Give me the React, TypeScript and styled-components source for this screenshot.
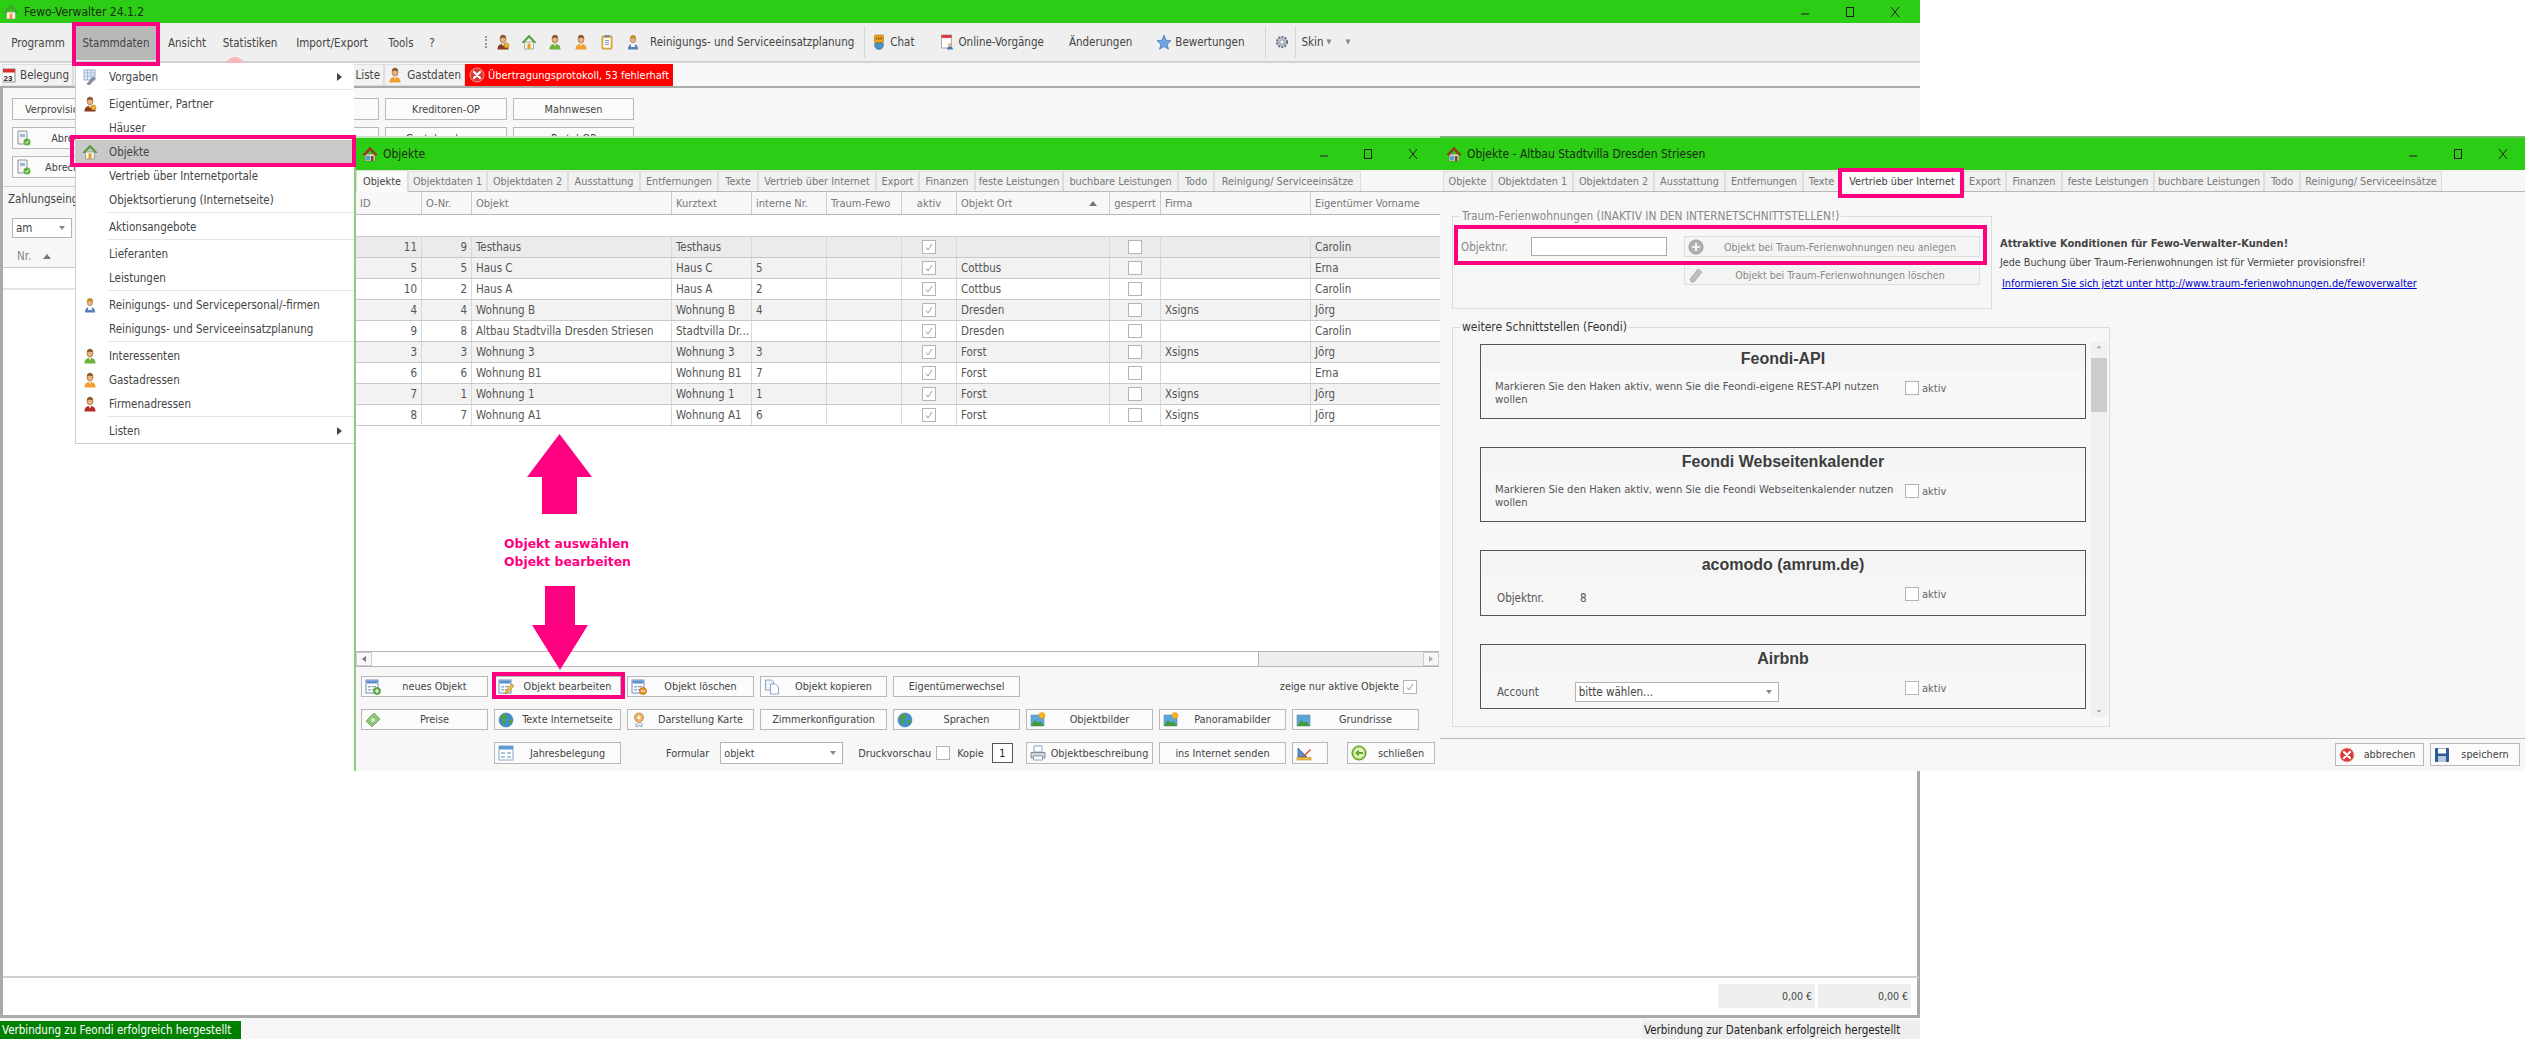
import React from "react";
import styled, { createGlobalStyle } from "styled-components";

const UI = `"DejaVu Sans Condensed", "DejaVu Sans", sans-serif`;
const PINK = "#ff0080";
const GREEN = "#2bce14";

const Global = createGlobalStyle`
  html, body { margin: 0; padding: 0; background: #fff; overflow: hidden; }
  #root { width: 2525px; height: 1039px; }
  * { box-sizing: border-box; }
  body { font-family: ${UI}; font-size: 11.5px; color: #444; font-stretch: condensed; }
`;

/* ---------- icons ---------- */
type IconName =
  | "house" | "lodge" | "green" | "orange" | "red" | "owner" | "clip" | "worker" | "chat" | "online" | "star" | "gear"
  | "cal" | "form" | "formEdit" | "formDel" | "copy" | "money" | "globe" | "pin" | "pic" | "plan" | "printer" | "ruler"
  | "back" | "cancel" | "save" | "plus" | "eraser" | "docOk" | "tools" | "year";

const Person = ({ body, tie }: { body: string; tie?: string }) => (
  <>
    <path d="M2.5 15.5c0-4 2-5.5 5.5-5.5s5.5 1.500 5.500 5.500z" fill={body} />
    <path d="M6.500 9.500h3l-1.500 3z" fill={tie || "#f5e3c8"} />
    <ellipse cx="8" cy="5" rx="3" ry="4" fill="#e9b27f" stroke="#8a5a30" strokeWidth=".6" />
    <path d="M5 4.500C5 2 6.500 1 8 1s3 1 3 3.500C9.500 3.500 6.500 3.500 5 4.500z" fill="#8a5a30" />
  </>
);

const FormBase = () => (
  <>
    <rect x="1" y="1" width="12" height="13" fill="#fff" stroke="#6d8fb5" />
    <rect x="1.500" y="1.500" width="11" height="3" fill="#5b8fd0" />
    <path d="M3 7h3v1.500H3zM3 10h3v1.500H3z" fill="#8bb0d8" />
    <path d="M7 7.700h4M7 10.700h4" stroke="#7a7a7a" />
  </>
);

const Picture = ({ sun }: { sun?: boolean }) => (
  <>
    <rect x="1" y="3" width="13" height="11" fill="#5aa5dc" stroke="#6c8aa0" strokeWidth=".6" />
    <path d="M1 14l4-6 3 3 2-2 4 5z" fill="#3f9a3a" />
    {sun && <circle cx="12" cy="3.500" r="3" fill="#f5b428" stroke="#e08a10" strokeWidth=".5" />}
  </>
);

const paths: Record<IconName, React.ReactNode> = {
  house: (
    <>
      <path d="M3.500 8v7h9V8z" fill="#f5f5f0" stroke="#7a9a70" strokeWidth=".7" />
      <path d="M8 1L1 8.500h2L8 3.500l5 5h2z" fill="#55a83c" stroke="#3c7a2c" strokeWidth=".5" />
      <rect x="6.500" y="9.500" width="3" height="5.500" fill="#f09a28" />
    </>
  ),
  lodge: (
    <>
      <path d="M3 8v7h10V8z" fill="#e8d8c0" stroke="#7a6040" strokeWidth=".5" />
      <path d="M8 1L1 8.500l2 1L8 4l5 5.500 2-1z" fill="#a83c22" stroke="#6c2812" strokeWidth=".5" />
      <circle cx="6" cy="12" r="2.500" fill="#5a9ed0" />
      <rect x="9" y="10" width="2.500" height="5" fill="#70492a" />
    </>
  ),
  green: <Person body="#6cb23c" />,
  orange: <Person body="#f0a030" />,
  red: <Person body="#b52a2a" tie="#fff" />,
  owner: (
    <>
      <Person body="#8c3a1e" />
      <circle cx="11.500" cy="11.500" r="2.500" fill="#f0b030" stroke="#9a6a10" strokeWidth=".5" />
    </>
  ),
  clip: (
    <>
      <rect x="3" y="2" width="10" height="13" rx="1" fill="#f4c44a" stroke="#a87c18" strokeWidth=".7" />
      <rect x="4.500" y="4" width="7" height="9.500" fill="#fff" />
      <rect x="5.500" y="1" width="5" height="2.500" fill="#7a8da0" />
      <path d="M6 6.500h4M6 8.500h4M6 10.500h4" stroke="#5a7ca8" strokeWidth=".8" />
    </>
  ),
  worker: (
    <>
      <path d="M3 15.500c0-4 2-5.500 5-5.500s5 1.500 5 5.500z" fill="#5480bc" />
      <path d="M6 10h4v3H6z" fill="#f5f5f5" />
      <ellipse cx="8" cy="5.500" rx="2.700" ry="3.300" fill="#e9b27f" stroke="#8a5a30" strokeWidth=".5" />
      <path d="M5 4.500C5 2 6.500 1 8 1s3 1 3 3.500z" fill="#c09020" />
    </>
  ),
  chat: (
    <>
      <circle cx="8" cy="11" r="4.500" fill="#4a90c8" stroke="#2c6a98" strokeWidth=".5" />
      <path d="M5 9l2 1-1 3z" fill="#5aa040" />
      <rect x="3.500" y="1" width="9" height="7.500" rx="1" fill="#f2a51f" stroke="#9a6a10" strokeWidth=".6" />
      <path d="M5.500 3.500v2M7.500 3.500v2M9 3.500v2M10.500 3.500v2" stroke="#5c3a0a" strokeWidth=".8" />
    </>
  ),
  online: (
    <>
      <rect x="2.500" y="1" width="10" height="13" fill="#fff" stroke="#8b8b8b" strokeWidth=".7" />
      <rect x="2.500" y="1" width="10" height="3" fill="#d84040" />
      <circle cx="11" cy="11" r="2" fill="#e9b27f" />
      <path d="M8 15.500c0-2 1.500-3 3-3s3 1 3 3z" fill="#3f78b5" />
    </>
  ),
  star: <path d="M8 1l2 5.200 5 .5-3.800 3.500 1.200 5L8 12.500l-4.400 2.700 1.200-5L1 6.700l5-.5z" fill="#6ea8e0" stroke="#3c74b0" strokeWidth=".7" />,
  gear: (
    <>
      <circle cx="8" cy="8" r="5" fill="#c8ccd8" stroke="#6c7488" strokeWidth="2.200" strokeDasharray="2 1.200" />
      <circle cx="8" cy="8" r="2.200" fill="#fff" stroke="#6c7488" strokeWidth=".8" />
    </>
  ),
  cal: (
    <>
      <rect x="1" y="2" width="14" height="13" fill="#fff" stroke="#777" strokeWidth=".8" />
      <rect x="1" y="2" width="14" height="3.500" fill="#d83030" />
      <text x="8" y="13.500" fontSize="8" fontWeight="700" textAnchor="middle" fill="#222" fontFamily="Liberation Sans">23</text>
    </>
  ),
  form: (
    <>
      <FormBase />
      <circle cx="12" cy="12" r="3.500" fill="#62b046" stroke="#357a22" strokeWidth=".6" />
      <path d="M12 10v4M10 12h4" stroke="#fff" />
    </>
  ),
  formEdit: (
    <>
      <FormBase />
      <path d="M7 15l1-3 6-7 2 1.800-6 7z" fill="#f0c040" stroke="#a87c18" strokeWidth=".6" />
    </>
  ),
  formDel: (
    <>
      <FormBase />
      <circle cx="12" cy="12" r="3.500" fill="#f0922a" stroke="#a85c10" strokeWidth=".6" />
      <path d="M10 12h4" stroke="#fff" />
    </>
  ),
  copy: (
    <>
      <path d="M1.500 1h6l2 2v8h-8z" fill="#eef3fa" stroke="#6f8fb8" strokeWidth=".8" />
      <path d="M6.500 5h5l3 3v7h-8z" fill="#fff" stroke="#6f8fb8" strokeWidth=".8" />
    </>
  ),
  money: (
    <>
      <path d="M1 9l8-8 6 6-8 8z" fill="#8fc878" stroke="#5c9a48" strokeWidth=".7" />
      <circle cx="8" cy="8" r="2" fill="#d7edc8" />
    </>
  ),
  globe: (
    <>
      <circle cx="8" cy="8" r="7" fill="#3f8fd0" stroke="#2a6aa0" strokeWidth=".5" />
      <path d="M3 4c3-2 5-2 6-1 1 2-1 3-2 4s1 3 0 5-3-1-3-3-3-2-1-5zM11 8c2-1 3 0 3 1 0 2-2 3-3 3s-1-3 0-4z" fill="#4fa040" />
    </>
  ),
  pin: (
    <>
      <path d="M8 1a4.500 4.500 0 0 1 4.500 4.500C12.500 9 8 11 8 11S3.500 9 3.500 5.500A4.500 4.500 0 0 1 8 1z" fill="#eeb46c" stroke="#a0702c" strokeWidth=".7" />
      <circle cx="8" cy="5.500" r="1.500" fill="#fff" />
      <path d="M5 11v4l3-1.500 3 1.500v-4" fill="#e4e8f0" stroke="#7c8aa0" strokeWidth=".7" />
    </>
  ),
  pic: <Picture sun />,
  plan: <Picture />,
  printer: (
    <>
      <path d="M4 1h8v6H4z" fill="#fff" stroke="#6f8fb8" strokeWidth=".8" />
      <path d="M1 7.500h14V13H1z" fill="#cfd6de" stroke="#6a7888" strokeWidth=".8" />
      <path d="M3.500 11h9v4h-9z" fill="#fff" stroke="#6a7888" strokeWidth=".7" />
    </>
  ),
  ruler: (
    <>
      <path d="M2 3v9h9z" fill="#5b8fd0" stroke="#2c5a96" strokeWidth=".7" />
      <path d="M5 13l9-9 1 1-9 9z" fill="#e04a30" />
      <rect x="1" y="12.500" width="14" height="2.500" fill="#f0c040" stroke="#a87c18" strokeWidth=".5" />
    </>
  ),
  back: (
    <>
      <circle cx="8" cy="8" r="7" fill="#a8d85c" stroke="#4e8a20" strokeWidth="1" />
      <circle cx="8" cy="8" r="5" fill="#e8f6d0" />
      <path d="M4 8l4-3.500V7h4v2H8v2.500z" fill="#62a828" />
    </>
  ),
  cancel: (
    <>
      <circle cx="8" cy="8" r="7" fill="#d83a3a" stroke="#f4b0b0" strokeWidth=".8" />
      <path d="M5 5l6 6M11 5l-6 6" stroke="#fff" strokeWidth="2.200" strokeLinecap="round" />
    </>
  ),
  save: (
    <>
      <rect x="1" y="1" width="14" height="14" rx="1" fill="#2d5c96" />
      <rect x="4" y="1.500" width="8" height="5" fill="#fff" />
      <rect x="4" y="9" width="8" height="6" fill="#b7c8dc" />
    </>
  ),
  plus: (
    <>
      <circle cx="8" cy="8" r="7" fill="#b0b0b0" stroke="#999" />
      <path d="M8 4v8M4 8h8" stroke="#f4f4f4" strokeWidth="2" />
    </>
  ),
  eraser: <path d="M2 12l8-10 4 3-8 10H3z" fill="#bdbdbd" stroke="#a0a0a0" strokeWidth=".7" />,
  docOk: (
    <>
      <path d="M2 1h9v13H2z" fill="#f4f4f4" stroke="#7a7a7a" strokeWidth=".8" />
      <path d="M4 4h5v3H4z" fill="#9bb8d8" />
      <circle cx="11" cy="12" r="3.500" fill="#5db23c" />
      <path d="M9.300 12l1.300 1.300 2.200-2.500" stroke="#fff" strokeWidth="1" fill="none" />
    </>
  ),
  tools: (
    <>
      <rect x="2" y="1" width="11" height="10" fill="#e8eef8" stroke="#6f8fb8" strokeWidth=".7" />
      <path d="M2 4h11M2 7h11M5.500 1v10M9 1v10" stroke="#6f8fb8" strokeWidth=".5" />
      <path d="M5 15l6-7 2 1.500L7.500 16z" fill="#8a94a6" stroke="#555" strokeWidth=".5" />
    </>
  ),
  year: (
    <>
      <rect x="1" y="1" width="14" height="14" fill="#fff" stroke="#6f8fb8" strokeWidth=".8" />
      <rect x="1" y="1" width="14" height="3.500" fill="#5b9bd8" />
      <path d="M3 7h4v2H3zM9 7h4v2H9zM3 11h4v2H3zM9 11h4v2H9z" fill="#a8c4e4" />
    </>
  ),
};

const IconSvg = styled.svg`
  flex: none;
  display: block;
`;
const Icon = ({ name, size = 16 }: { name: IconName; size?: number }) => (
  <IconSvg width={size} height={size} viewBox="0 0 16 16">{paths[name]}</IconSvg>
);

/* ---------- shell ---------- */
const Desktop = styled.div`
  position: relative;
  width: 2525px;
  height: 1039px;
  overflow: hidden;
  background: #fff;
`;
const MainWindow = styled.div`
  width: 1920px;
  height: 1039px;
  display: flex;
  flex-direction: column;
`;
const TitleBar = styled.div<{ $h: number; $pl: number }>`
  height: ${(p) => p.$h}px;
  flex: none;
  background: ${GREEN};
  display: flex;
  align-items: center;
  gap: 5px;
  padding-left: ${(p) => p.$pl}px;
  color: #1c2a14;
  font-size: 12px;
`;
const TitleText = styled.span`
  flex: 1;
`;
const WinControls = styled.div<{ $w: number; $mr: number }>`
  width: ${(p) => p.$w}px;
  margin-right: ${(p) => p.$mr}px;
  display: grid;
  grid-template-columns: repeat(3, 1fr);
  justify-items: center;
  align-items: center;
  color: #111;
`;
const Toolbar = styled.div`
  height: 40px;
  flex: none;
  display: flex;
  align-items: center;
  background: #efefef;
  border-bottom: 2px solid #d2d2d2;
  font-size: 11.5px;
  color: #444;
`;
const MenuLabel = styled.span<{ $w: number; $active?: boolean }>`
  width: ${(p) => p.$w}px;
  align-self: stretch;
  display: flex;
  align-items: center;
  justify-content: center;
  margin: 3px 0 1px;
  background: ${(p) => (p.$active ? "#b8b8b8" : "transparent")};
`;
const Grip = styled.span`
  width: 2px;
  height: 12px;
  margin: 0 3px 0 41px;
  border-left: 2px dotted #999;
`;
const ToolIcon = styled.span`
  width: 26px;
  display: flex;
  justify-content: center;
`;
const ToolText = styled.span<{ $pl?: number; $pr?: number }>`
  padding: 0 ${(p) => p.$pr ?? 8}px 0 ${(p) => p.$pl ?? 4}px;
  white-space: nowrap;
  display: inline-flex;
  align-items: center;
  gap: 3px;
`;
const ToolSep = styled.span<{ $ml?: number; $mr?: number }>`
  width: 1px;
  height: 32px;
  margin: 0 ${(p) => p.$mr ?? 5}px 0 ${(p) => p.$ml ?? 5}px;
  background: #d6d6d6;
`;
const TinyArrow = styled.span`
  font-size: 7px;
  color: #888;
`;
const TabStrip = styled.div`
  height: 25px;
  flex: none;
  display: flex;
  align-items: flex-end;
  gap: 0;
  padding-left: 2px;
  background: #f8f8f8;
  border-bottom: 2px solid #aaa;
`;
const MainTab = styled.div<{ $w: number; $danger?: boolean }>`
  width: ${(p) => p.$w}px;
  height: 22px;
  display: flex;
  align-items: center;
  justify-content: ${(p) => (p.$danger ? "center" : "flex-end")};
  gap: ${(p) => (p.$danger ? 3 : 4)}px;
  padding-right: ${(p) => (p.$danger ? 0 : 3)}px;
  white-space: nowrap;
  overflow: hidden;
  font-size: ${(p) => (p.$danger ? 11 : 11.5)}px;
  border: 1px solid ${(p) => (p.$danger ? "#f00" : "#ddd")};
  background: ${(p) => (p.$danger ? "#f00" : "#f2f2f2")};
  color: ${(p) => (p.$danger ? "#fff" : "#444")};
`;
const MainBody = styled.div`
  flex: 1;
  min-height: 0;
  display: flex;
  flex-direction: column;
  border-left: 3px solid #aaa;
`;
const TopPanel = styled.div`
  flex: none;
  height: 99px;
  padding: 10px 0 0 9px;
  background: #f7f7f7;
  border-bottom: 1px solid #ccc;
`;
const TopGrid = styled.div`
  display: grid;
  grid-template-columns: 117px 117px 121px 122px 121px;
  grid-auto-rows: 22px;
  gap: 7px 6px;
  justify-content: start;
`;
const Btn = styled.div<{ $w?: number }>`
  width: ${(p) => (p.$w ? `${p.$w}px` : "auto")};
  height: 100%;
  min-width: 0;
  flex: none;
  display: flex;
  align-items: center;
  gap: 4px;
  padding: 0 3px;
  background: #fbfbfb;
  border: 1px solid #b8b8b8;
  color: #444;
  font-size: 10.8px;
  white-space: nowrap;
  overflow: hidden;
`;
const BtnLabel = styled.span`
  flex: 1;
  text-align: center;
`;
const PayPanel = styled.div`
  flex: none;
  height: 58px;
  background: #f7f7f7;
  padding: 5px 0 0 5px;
`;
const SelectBox = styled.div<{ $w: number; $h: number }>`
  width: ${(p) => p.$w}px;
  height: ${(p) => p.$h}px;
  display: flex;
  align-items: center;
  justify-content: space-between;
  padding: 0 6px 0 3px;
  background: #fff;
  border: 1px solid #b4b4b4;
  color: #444;
  white-space: nowrap;
`;
const Caret = styled.span`
  width: 0;
  height: 0;
  border: 3px solid transparent;
  border-top: 4px solid #888;
  border-bottom: 0;
`;
const SmallLabel = styled.div`
  height: 15px;
  margin-bottom: 11px;
`;
const PayIndent = styled.div`
  padding-left: 4px;
`;
const MiniHead = styled.div`
  flex: none;
  height: 23px;
  display: flex;
  align-items: center;
  padding-left: 14px;
  gap: 12px;
  color: #888;
  background: #f7f7f7;
  border-bottom: 1px solid #ccc;
`;
const SortUp = styled.span`
  flex: none;
  width: 0;
  height: 0;
  border: 4px solid transparent;
  border-bottom: 5px solid #777;
  border-top: 0;
`;
const EmptyRow = styled.div`
  flex: none;
  height: 22px;
  background: #fff;
  border-bottom: 2px solid #e4e4e4;
`;
const WhiteFill = styled.div`
  flex: 1;
  background: #fff;
  border-bottom: 2px solid #d0d0d0;
  border-right: 3px solid #aaa;
`;
const SumRow = styled.div`
  flex: none;
  height: 37px;
  background: #fff;
  padding: 6px 6px 0 0;
  border-right: 3px solid #aaa;
  display: flex;
  justify-content: flex-end;
  gap: 3px;
`;
const SumCell = styled.div<{ $w: number }>`
  width: ${(p) => p.$w}px;
  height: 24px;
  background: #efefef;
  display: flex;
  align-items: center;
  justify-content: flex-end;
  padding-right: 3px;
  font-size: 10.5px;
`;
const StatusBar = styled.div`
  flex: none;
  height: 24px;
  display: flex;
  align-items: flex-start;
  justify-content: space-between;
  padding-top: 3px;
  background: #f6f6f6;
  border-top: 3px solid #aaa;
`;
const StatusOk = styled.div`
  width: 241px;
  height: 18px;
  line-height: 18px;
  background: #008000;
  color: #fff;
  padding-left: 2px;
  white-space: nowrap;
`;
const StatusRight = styled.div`
  width: 278px;
  height: 18px;
  line-height: 18px;
  background: #eeeeee;
  color: #222;
  padding-left: 2px;
  white-space: nowrap;
`;

/* ---------- overlays ---------- */
const Highlight = styled.div<{ $x: number; $y: number; $w: number; $h: number }>`
  position: absolute;
  left: ${(p) => p.$x}px;
  top: ${(p) => p.$y}px;
  width: ${(p) => p.$w}px;
  height: ${(p) => p.$h}px;
  border: 4px solid ${PINK};
  z-index: 30;
  pointer-events: none;
`;
const Blob = styled.div`
  position: absolute;
  left: 225px;
  top: 57px;
  width: 20px;
  height: 20px;
  border-radius: 50%;
  background: #f9b8b8;
`;
const Menu = styled.div`
  position: absolute;
  left: 75px;
  top: 63px;
  width: 279px;
  height: 381px;
  z-index: 10;
  background: #fff;
  border: 1px solid #ccc;
  border-top: 0;
  border-right: 0;
  padding-top: 2px;
`;
const MenuRow = styled.div<{ $active?: boolean }>`
  height: 24px;
  display: flex;
  align-items: center;
  padding: 0 12px 0 6px;
  color: #444;
  background: ${(p) => (p.$active ? "#c9c9c9" : "transparent")};
  font-size: 11.5px;
`;
const MenuIcon = styled.span`
  width: 16px;
  margin-right: 11px;
  flex: none;
  display: flex;
`;
const MenuText = styled.span`
  flex: 1;
  white-space: nowrap;
`;
const MenuChevron = styled.span`
  width: 0;
  height: 0;
  border: 4px solid transparent;
  border-left: 5px solid #444;
  border-right: 0;
`;
const MenuSep = styled.div`
  height: 3px;
  margin-left: 31px;
  border-top: 1px solid #e4e4e4;
`;
const ArrowSvg = styled.svg<{ $x: number; $y: number }>`
  position: absolute;
  left: ${(p) => p.$x}px;
  top: ${(p) => p.$y}px;
  z-index: 30;
`;
const Callout = styled.div`
  position: absolute;
  left: 504px;
  top: 535px;
  z-index: 30;
  color: ${PINK};
  font-family: "DejaVu Sans", sans-serif;
  font-stretch: normal;
  font-weight: 700;
  font-size: 12.4px;
  line-height: 18px;
  white-space: nowrap;
`;

/* ---------- sub windows ---------- */
const SubWindow = styled.div<{ $x: number; $w: number; $edge?: boolean }>`
  position: absolute;
  left: ${(p) => p.$x}px;
  top: 136px;
  width: ${(p) => p.$w}px;
  height: 635px;
  z-index: 5;
  display: flex;
  flex-direction: column;
  background: #f7f7f7;
  border-top: 2px solid ${(p) => (p.$edge ? "#c6e6bf" : "#7ab870")};
  border-left: ${(p) => (p.$edge ? "2px solid #8ccc80" : "0")};
`;
const TabRow = styled.div<{ $pl: number }>`
  flex: none;
  height: 22px;
  display: flex;
  padding-left: ${(p) => p.$pl}px;
  border-bottom: 1px solid #b8b8b8;
  background: #f7f7f7;
`;
const WinTab = styled.div<{ $w: number; $active?: boolean }>`
  width: ${(p) => p.$w}px;
  height: ${(p) => (p.$active ? 22 : 20)}px;
  margin-top: ${(p) => (p.$active ? 0 : 1)}px;
  display: flex;
  align-items: center;
  justify-content: center;
  white-space: nowrap;
  font-size: 10.8px;
  background: ${(p) => (p.$active ? "#fafafa" : "#f1f1f1")};
  border: 1px solid #ddd;
  border-bottom: 0;
  color: ${(p) => (p.$active ? "#444" : "#777")};
  z-index: ${(p) => (p.$active ? 1 : 0)};
`;
const COLS = "65px 50px 200px 80px 75px 75px 55px 153px 51px 150px 129px";
const TableWrap = styled.div`
  flex: 1;
  min-height: 0;
  display: flex;
  flex-direction: column;
  background: #fff;
`;
const HeadRow = styled.div`
  flex: none;
  height: 23px;
  display: grid;
  grid-template-columns: ${COLS};
  background: #f7f7f7;
  border-bottom: 1px solid #b8b8b8;
`;
const HeadCell = styled.div<{ $center?: boolean; $between?: boolean }>`
  display: flex;
  align-items: center;
  justify-content: ${(p) => (p.$center ? "center" : p.$between ? "space-between" : "flex-start")};
  padding: ${(p) => (p.$between ? "0 12px 0 4px" : p.$center ? "0" : "0 0 0 4px")};
  color: #777;
  font-size: 11px;
  white-space: nowrap;
  overflow: hidden;
  border-left: 1px solid #ccc;
  &:first-child { border-left: 0; }
`;
const FilterRow = styled.div`
  flex: none;
  height: 22px;
  background: #fff;
  border-bottom: 1px solid #ccc;
`;
const DataRow = styled.div<{ $tone: string }>`
  flex: none;
  height: 21px;
  display: grid;
  grid-template-columns: ${COLS};
  background: ${(p) => p.$tone};
  border-bottom: 1px solid #c8c8c8;
`;
const Cell = styled.div<{ $right?: boolean; $center?: boolean }>`
  display: flex;
  align-items: center;
  justify-content: ${(p) => (p.$right ? "flex-end" : p.$center ? "center" : "flex-start")};
  padding: 0 4px;
  color: #555;
  border-left: 1px solid #d8d8d8;
  white-space: nowrap;
  overflow: hidden;
  &:first-child { border-left: 0; }
`;
const Check = styled.span<{ $size?: number }>`
  flex: none;
  width: ${(p) => p.$size ?? 14}px;
  height: ${(p) => p.$size ?? 14}px;
  background: #fff;
  border: 1px solid #b4b4b4;
  display: flex;
  align-items: center;
  justify-content: center;
`;
const CheckMark = () => (
  <IconSvg width="10" height="10" viewBox="0 0 10 10">
    <path d="M2 5.500L4 8l4-6" fill="none" stroke="#9a9a9a" strokeWidth="1" />
  </IconSvg>
);
const HScroll = styled.div`
  flex: none;
  height: 16px;
  display: flex;
  background: #efefef;
  border-top: 1px solid #b4b4b4;
  border-bottom: 1px solid #b4b4b4;
  margin: 0 1px 0 0;
`;
const ScrollBtn = styled.div<{ $dir: "l" | "r" }>`
  width: 16px;
  flex: none;
  display: flex;
  align-items: center;
  justify-content: center;
  background: #f7f7f7;
  border: 1px solid #ccc;
  &::after {
    content: "";
    border: 3px solid transparent;
    ${(p) => (p.$dir === "l" ? "border-right: 4px solid #777; border-left: 0;" : "border-left: 4px solid #aaa; border-right: 0;")}
  }
`;
const ScrollThumb = styled.div`
  width: 887px;
  flex: none;
  background: #fff;
  border-right: 1px solid #b4b4b4;
`;
const ScrollTrack = styled.div`
  flex: 1;
`;
const ButtonsArea = styled.div`
  flex: none;
  height: 104px;
  padding: 9px 0 0 5px;
  display: grid;
  grid-template-columns: repeat(8, 127px);
  grid-template-rows: 21px 21px 22px;
  column-gap: 6px;
  row-gap: 12px;
  background: #f7f7f7;
`;
const ShowOnly = styled.div`
  grid-column: 7 / 9;
  display: flex;
  align-items: center;
  justify-content: flex-end;
  gap: 4px;
  padding-right: 2px;
  font-size: 10.8px;
  white-space: nowrap;
`;
const FormField = styled.div`
  grid-column: 3 / 6;
  display: flex;
  align-items: center;
  font-size: 10.8px;
  white-space: nowrap;
`;
const FormLabel = styled.span<{ $ml: number; $mr: number }>`
  margin: 0 ${(p) => p.$mr}px 0 ${(p) => p.$ml}px;
`;
const CopyBox = styled.span`
  width: 21px;
  height: 20px;
  display: flex;
  align-items: center;
  justify-content: center;
  background: #fff;
  border: 1px solid #555;
  color: #222;
`;
const LastCol = styled.div`
  display: flex;
  gap: 19px;
  align-items: stretch;
`;
const Spacer = styled.div``;

/* right window */
const EditBody = styled.div`
  flex: 1;
  min-height: 0;
  padding: 17px 0 0 12px;
  background: #f7f7f7;
  display: flex;
  flex-direction: column;
`;
const TopRow = styled.div`
  display: flex;
  align-items: flex-start;
`;
const Group = styled.fieldset<{ $w: number; $h: number; $dark?: boolean }>`
  width: ${(p) => p.$w}px;
  height: ${(p) => p.$h}px;
  margin: 0;
  padding: 0;
  flex: none;
  border: 1px solid #dcdcdc;
  min-width: 0;
  & > legend {
    margin-left: 7px;
    padding: 0 2px;
    font-size: ${(p) => (p.$dark ? 12 : 11.8)}px;
    color: ${(p) => (p.$dark ? "#333" : "#888")};
    line-height: 15px;
    white-space: nowrap;
  }
`;
const TraumGrid = styled.div`
  display: grid;
  grid-template-columns: 53px 136px 296px;
  grid-auto-rows: 21px;
  column-gap: 17px;
  row-gap: 7px;
  margin: 12px 0 0 8px;
  align-items: center;
  color: #888;
`;
const TextInput = styled.div`
  height: 19px;
  background: #fff;
  border: 1px solid #aaa;
`;
const GhostBtn = styled.div<{ $col?: number }>`
  grid-column: ${(p) => p.$col ?? "auto"};
  height: 21px;
  display: flex;
  align-items: center;
  padding: 0 3px;
  background: #f4f4f4;
  border: 1px solid #ddd;
  color: #888;
  font-size: 10.6px;
  white-space: nowrap;
`;
const Promo = styled.div`
  margin: 27px 0 0 8px;
  display: flex;
  flex-direction: column;
  gap: 4px;
  white-space: nowrap;
  color: #444;
`;
const PromoHead = styled.div`
  font-weight: 700;
  line-height: 15px;
  font-size: 11px;
`;
const PromoLine = styled.div`
  line-height: 15px;
  font-size: 10.7px;
`;
const PromoLink = styled.a`
  line-height: 15px;
  margin: 2px 0 0 2px;
  font-size: 10.8px;
  color: #0000cc;
  text-decoration: underline;
`;
const SecondGroup = styled.div`
  margin-top: 11px;
`;
const GroupInner = styled.div`
  display: flex;
  padding: 9px 3px 0 27px;
  gap: 5px;
  height: 384px;
`;
const PanelColumn = styled.div`
  width: 606px;
  flex: none;
  display: flex;
  flex-direction: column;
  gap: 28px;
`;
const Panel = styled.div<{ $h: number }>`
  height: ${(p) => p.$h}px;
  flex: none;
  border: 1px solid #555;
`;
const PanelTitle = styled.div`
  height: 27px;
  line-height: 27px;
  text-align: center;
  font-family: "Liberation Sans", sans-serif;
  font-stretch: normal;
  font-size: 16px;
  font-weight: 700;
  color: #3d3d3d;
  background: #f5f5f5;
`;
const PanelBody = styled.div`
  display: grid;
  grid-template-columns: 410px 1fr;
  padding: 8px 0 0 14px;
`;
const PanelNote = styled.div`
  line-height: 13px;
  font-size: 11.2px;
  white-space: nowrap;
  color: #555;
`;
const PanelField = styled.div<{ $gap: number }>`
  display: flex;
  align-items: center;
  gap: ${(p) => p.$gap}px;
  height: 24px;
  color: #555;
  padding-left: 2px;
`;
const ActiveBox = styled.div`
  display: flex;
  align-items: center;
  gap: 3px;
  height: 14px;
  margin-top: 1px;
  color: #666;
  font-size: 11px;
`;
const VScroll = styled.div`
  width: 16px;
  flex: none;
  height: 375px;
  margin-top: -2px;
  display: flex;
  flex-direction: column;
  align-items: center;
  background: #f0f0f0;
`;
const VGlyph = styled.span`
  height: 16px;
  font-size: 9px;
  line-height: 16px;
  color: #666;
`;
const VThumb = styled.div`
  width: 100%;
  height: 54px;
  background: #ccc;
`;
const VFill = styled.div`
  flex: 1;
`;
const WinFooter = styled.div`
  flex: none;
  height: 33px;
  border-top: 1px solid #b8b8b8;
  display: flex;
  justify-content: flex-end;
  align-items: flex-start;
  gap: 6px;
  padding: 4px 5px 0 0;
`;
const FootBtn = styled(Btn)`
  height: 23px;
`;

/* ---------- data ---------- */
const subTabs = [
  ["Objekte", 52], ["Objektdaten 1", 79], ["Objektdaten 2", 81], ["Ausstattung", 72], ["Entfernungen", 78], ["Texte", 40],
  ["Vertrieb über Internet", 118], ["Export", 43], ["Finanzen", 56], ["feste Leistungen", 88], ["buchbare Leistungen", 115],
  ["Todo", 36], ["Reinigung/ Serviceeinsätze", 147],
] as const;
const rightTabWidths = [49, 81, 81, 71, 78, 37, 124, 42, 56, 92, 110, 36, 142];

const rows = [
  ["11", "9", "Testhaus", "Testhaus", "", "", "", "Carolin"],
  ["5", "5", "Haus C", "Haus C", "5", "Cottbus", "", "Erna"],
  ["10", "2", "Haus A", "Haus A", "2", "Cottbus", "", "Carolin"],
  ["4", "4", "Wohnung B", "Wohnung B", "4", "Dresden", "Xsigns", "Jörg"],
  ["9", "8", "Altbau Stadtvilla Dresden Striesen", "Stadtvilla Dr...", "", "Dresden", "", "Carolin"],
  ["3", "3", "Wohnung 3", "Wohnung 3", "3", "Forst", "Xsigns", "Jörg"],
  ["6", "6", "Wohnung B1", "Wohnung B1", "7", "Forst", "", "Erna"],
  ["7", "1", "Wohnung 1", "Wohnung 1", "1", "Forst", "Xsigns", "Jörg"],
  ["8", "7", "Wohnung A1", "Wohnung A1", "6", "Forst", "Xsigns", "Jörg"],
];

type MenuEntry = { label?: string; icon?: IconName; more?: boolean; active?: boolean; sep?: boolean };
const menu: MenuEntry[] = [
  { label: "Vorgaben", icon: "tools", more: true },
  { sep: true },
  { label: "Eigentümer, Partner", icon: "owner" },
  { label: "Häuser" },
  { label: "Objekte", icon: "house", active: true },
  { label: "Vertrieb über Internetportale" },
  { label: "Objektsortierung (Internetseite)" },
  { sep: true },
  { label: "Aktionsangebote" },
  { sep: true },
  { label: "Lieferanten" },
  { label: "Leistungen" },
  { sep: true },
  { label: "Reinigungs- und Servicepersonal/-firmen", icon: "worker" },
  { label: "Reinigungs- und Serviceeinsatzplanung" },
  { sep: true },
  { label: "Interessenten", icon: "green" },
  { label: "Gastadressen", icon: "orange" },
  { label: "Firmenadressen", icon: "red" },
  { sep: true },
  { label: "Listen", more: true },
];

const Controls = ({ w, mr }: { w: number; mr: number }) => (
  <WinControls $w={w} $mr={mr}>
    <IconSvg width="12" height="12" viewBox="0 0 12 12"><path d="M2 8h8" stroke="#333" strokeWidth="1.200" /></IconSvg>
    <IconSvg width="12" height="12" viewBox="0 0 12 12"><rect x="2.500" y="1.500" width="7" height="9" fill="none" stroke="#222" /></IconSvg>
    <IconSvg width="12" height="12" viewBox="0 0 12 12"><path d="M2 1l8 10M10 1L2 11" stroke="#222" strokeWidth="1" /></IconSvg>
  </WinControls>
);

const B = ({ icon, children, w }: { icon?: IconName; children?: React.ReactNode; w?: number }) => (
  <Btn $w={w}>
    {icon && <Icon name={icon} />}
    {children && <BtnLabel>{children}</BtnLabel>}
  </Btn>
);

const ActiveCheck = () => (
  <ActiveBox><Check />aktiv</ActiveBox>
);

export default function App() {
  return (
    <Desktop>
      <Global />
      <MainWindow>
        <TitleBar $h={23} $pl={3}>
          <Icon name="house" />
          <TitleText>Fewo-Verwalter 24.1.2</TitleText>
          <Controls w={135} mr={3} />
        </TitleBar>
        <Toolbar>
          <MenuLabel $w={76}>Programm</MenuLabel>
          <MenuLabel $w={80} $active>Stammdaten</MenuLabel>
          <MenuLabel $w={62}>Ansicht</MenuLabel>
          <MenuLabel $w={64}>Statistiken</MenuLabel>
          <MenuLabel $w={100}>Import/Export</MenuLabel>
          <MenuLabel $w={38}>Tools</MenuLabel>
          <MenuLabel $w={24}>?</MenuLabel>
          <Grip />
          {(["owner", "house", "green", "orange", "clip", "worker"] as IconName[]).map((n) => (
            <ToolIcon key={n}><Icon name={n} /></ToolIcon>
          ))}
          <ToolText $pl={4} $pr={6}>Reinigungs- und Serviceeinsatzplanung</ToolText>
          <ToolSep $ml={4} $mr={4} />
          <ToolText $pl={2} $pr={25}><Icon name="chat" />Chat</ToolText>
          <ToolText $pl={0} $pr={25}><Icon name="online" />Online-Vorgänge</ToolText>
          <ToolText $pl={0} $pr={24}>Änderungen</ToolText>
          <ToolText $pl={0} $pr={14}><Icon name="star" />Bewertungen</ToolText>
          <ToolSep $ml={6} $mr={8} />
          <Icon name="gear" />
          <ToolSep $ml={5} $mr={5} />
          <ToolText $pl={1} $pr={14}>Skin <TinyArrow>▼</TinyArrow></ToolText>
          <TinyArrow>▼</TinyArrow>
        </Toolbar>
        <TabStrip>
          <MainTab $w={71}><Icon name="cal" />Belegung</MainTab>
          <MainTab $w={120} />
          <MainTab $w={191}>Liste</MainTab>
          <MainTab $w={81}><Icon name="orange" />Gastdaten</MainTab>
          <MainTab $w={208} $danger><Icon name="cancel" />Übertragungsprotokoll, 53 fehlerhaft</MainTab>
        </TabStrip>
        <MainBody>
          <TopPanel>
            <TopGrid>
              <B>Verprovisionierung</B><B /><B>Offene Posten</B><B>Kreditoren-OP</B><B>Mahnwesen</B>
              <B icon="docOk">Abrechnung</B><B /><B /><B>Gastabrechnung</B><B>Portal-OP</B>
              <B icon="docOk">Abrechnungen</B>
            </TopGrid>
          </TopPanel>
          <PayPanel>
            <SmallLabel>Zahlungseingänge</SmallLabel>
            <PayIndent>
              <SelectBox $w={60} $h={20}>am<Caret /></SelectBox>
            </PayIndent>
          </PayPanel>
          <MiniHead>Nr.<SortUp /></MiniHead>
          <EmptyRow />
          <WhiteFill />
          <SumRow>
            <SumCell $w={97}>0,00 €</SumCell>
            <SumCell $w={93}>0,00 €</SumCell>
          </SumRow>
        </MainBody>
        <StatusBar>
          <StatusOk>Verbindung zu Feondi erfolgreich hergestellt</StatusOk>
          <StatusRight>Verbindung zur Datenbank erfolgreich hergestellt</StatusRight>
        </StatusBar>
      </MainWindow>

      <Blob />
      <Menu>
        {menu.map((m, i) =>
          m.sep ? (
            <MenuSep key={i} />
          ) : (
            <MenuRow key={i} $active={m.active}>
              <MenuIcon>{m.icon && <Icon name={m.icon} />}</MenuIcon>
              <MenuText>{m.label}</MenuText>
              {m.more && <MenuChevron />}
            </MenuRow>
          )
        )}
      </Menu>

      {/* Objekte list */}
      <SubWindow $x={354} $w={1086} $edge>
        <TitleBar $h={32} $pl={6}>
          <Icon name="lodge" />
          <TitleText>Objekte</TitleText>
          <Controls w={133} mr={5} />
        </TitleBar>
        <TabRow $pl={0}>
          {subTabs.map(([label, w], i) => (
            <WinTab key={label} $w={w} $active={i === 0}>{label}</WinTab>
          ))}
        </TabRow>
        <TableWrap>
          <HeadRow>
            <HeadCell>ID</HeadCell>
            <HeadCell>O-Nr.</HeadCell>
            <HeadCell>Objekt</HeadCell>
            <HeadCell>Kurztext</HeadCell>
            <HeadCell>interne Nr.</HeadCell>
            <HeadCell>Traum-Fewo</HeadCell>
            <HeadCell $center>aktiv</HeadCell>
            <HeadCell $between>Objekt Ort<SortUp /></HeadCell>
            <HeadCell $center>gesperrt</HeadCell>
            <HeadCell>Firma</HeadCell>
            <HeadCell>Eigentümer Vorname</HeadCell>
          </HeadRow>
          <FilterRow />
          {rows.map((r, i) => (
            <DataRow key={r[0]} $tone={i === 0 ? "#ebebeb" : i % 2 ? "#f2f2f2" : "#fff"}>
              <Cell $right>{r[0]}</Cell>
              <Cell $right>{r[1]}</Cell>
              <Cell>{r[2]}</Cell>
              <Cell>{r[3]}</Cell>
              <Cell>{r[4]}</Cell>
              <Cell />
              <Cell $center><Check><CheckMark /></Check></Cell>
              <Cell>{r[5]}</Cell>
              <Cell $center><Check /></Cell>
              <Cell>{r[6]}</Cell>
              <Cell>{r[7]}</Cell>
            </DataRow>
          ))}
        </TableWrap>
        <HScroll>
          <ScrollBtn $dir="l" />
          <ScrollThumb />
          <ScrollTrack />
          <ScrollBtn $dir="r" />
        </HScroll>
        <ButtonsArea>
          <B icon="form">neues Objekt</B>
          <B icon="formEdit">Objekt bearbeiten</B>
          <B icon="formDel">Objekt löschen</B>
          <B icon="copy">Objekt kopieren</B>
          <B>Eigentümerwechsel</B>
          <Spacer />
          <ShowOnly>zeige nur aktive Objekte <Check><CheckMark /></Check></ShowOnly>

          <B icon="money">Preise</B>
          <B icon="globe">Texte Internetseite</B>
          <B icon="pin">Darstellung Karte</B>
          <B>Zimmerkonfiguration</B>
          <B icon="globe">Sprachen</B>
          <B icon="pic">Objektbilder</B>
          <B icon="pic">Panoramabilder</B>
          <B icon="plan">Grundrisse</B>

          <Spacer />
          <B icon="year">Jahresbelegung</B>
          <FormField>
            <FormLabel $ml={39} $mr={11}>Formular</FormLabel>
            <SelectBox $w={123} $h={22}>objekt<Caret /></SelectBox>
            <FormLabel $ml={15} $mr={5}>Druckvorschau</FormLabel>
            <Check />
            <FormLabel $ml={7} $mr={8}>Kopie</FormLabel>
            <CopyBox>1</CopyBox>
          </FormField>
          <B icon="printer">Objektbeschreibung</B>
          <B>ins Internet senden</B>
          <LastCol>
            <B icon="ruler" w={36} />
            <B icon="back" w={88}>schließen</B>
          </LastCol>
        </ButtonsArea>
      </SubWindow>

      {/* Object details */}
      <SubWindow $x={1440} $w={1085}>
        <TitleBar $h={32} $pl={6}>
          <Icon name="lodge" />
          <TitleText>Objekte - Altbau Stadtvilla Dresden Striesen</TitleText>
          <Controls w={135} mr={0} />
        </TitleBar>
        <TabRow $pl={3}>
          {subTabs.map(([label], i) => (
            <WinTab key={label} $w={rightTabWidths[i]} $active={i === 6}>{label}</WinTab>
          ))}
        </TabRow>
        <EditBody>
          <TopRow>
            <Group $w={540} $h={100}>
              <legend>Traum-Ferienwohnungen (INAKTIV IN DEN INTERNETSCHNITTSTELLEN!)</legend>
              <TraumGrid>
                <span>Objektnr.</span>
                <TextInput />
                <GhostBtn><Icon name="plus" /><BtnLabel>Objekt bei Traum-Ferienwohnungen neu anlegen</BtnLabel></GhostBtn>
                <GhostBtn $col={3}><Icon name="eraser" /><BtnLabel>Objekt bei Traum-Ferienwohnungen löschen</BtnLabel></GhostBtn>
              </TraumGrid>
            </Group>
            <Promo>
              <PromoHead>Attraktive Konditionen für Fewo-Verwalter-Kunden!</PromoHead>
              <PromoLine>Jede Buchung über Traum-Ferienwohnungen ist für Vermieter provisionsfrei!</PromoLine>
              <PromoLink>Informieren Sie sich jetzt unter http://www.traum-ferienwohnungen.de/fewoverwalter</PromoLink>
            </Promo>
          </TopRow>
          <SecondGroup>
            <Group $w={658} $h={407} $dark>
              <legend>weitere Schnittstellen (Feondi)</legend>
              <GroupInner>
                <PanelColumn>
                  <Panel $h={75}>
                    <PanelTitle>Feondi-API</PanelTitle>
                    <PanelBody>
                      <PanelNote>Markieren Sie den Haken aktiv, wenn Sie die Feondi-eigene REST-API nutzen<br />wollen</PanelNote>
                      <ActiveCheck />
                    </PanelBody>
                  </Panel>
                  <Panel $h={75}>
                    <PanelTitle>Feondi Webseitenkalender</PanelTitle>
                    <PanelBody>
                      <PanelNote>Markieren Sie den Haken aktiv, wenn Sie die Feondi Webseitenkalender nutzen<br />wollen</PanelNote>
                      <ActiveCheck />
                    </PanelBody>
                  </Panel>
                  <Panel $h={66}>
                    <PanelTitle>acomodo (amrum.de)</PanelTitle>
                    <PanelBody>
                      <PanelField $gap={36}><span>Objektnr.</span><span>8</span></PanelField>
                      <ActiveCheck />
                    </PanelBody>
                  </Panel>
                  <Panel $h={65}>
                    <PanelTitle>Airbnb</PanelTitle>
                    <PanelBody>
                      <PanelField $gap={36}><span>Account</span><SelectBox $w={204} $h={20}>bitte wählen...<Caret /></SelectBox></PanelField>
                      <ActiveCheck />
                    </PanelBody>
                  </Panel>
                </PanelColumn>
                <VScroll>
                  <VGlyph>⌃</VGlyph>
                  <VThumb />
                  <VFill />
                  <VGlyph>⌄</VGlyph>
                </VScroll>
              </GroupInner>
            </Group>
          </SecondGroup>
        </EditBody>
        <WinFooter>
          <FootBtn $w={89}><Icon name="cancel" /><BtnLabel>abbrechen</BtnLabel></FootBtn>
          <FootBtn $w={90}><Icon name="save" /><BtnLabel>speichern</BtnLabel></FootBtn>
        </WinFooter>
      </SubWindow>

      {/* annotations */}
      <Highlight $x={72} $y={22} $w={88} $h={44} />
      <Highlight $x={70} $y={135} $w={286} $h={32} />
      <Highlight $x={492} $y={672} $w={133} $h={27} />
      <Highlight $x={1454} $y={225} $w={533} $h={40} />
      <Highlight $x={1838} $y={168} $w={126} $h={30} />
      <ArrowSvg $x={527} $y={434} width="66" height="81" viewBox="0 0 66 81">
        <path d="M32.500 0L65 43H50V80H15V43H0z" fill={PINK} />
      </ArrowSvg>
      <Callout>Objekt auswählen<br />Objekt bearbeiten</Callout>
      <ArrowSvg $x={532} $y={586} width="56" height="84" viewBox="0 0 56 84">
        <path d="M13 0H43V39H56L28 84L0 39H13z" fill={PINK} />
      </ArrowSvg>
    </Desktop>
  );
}
